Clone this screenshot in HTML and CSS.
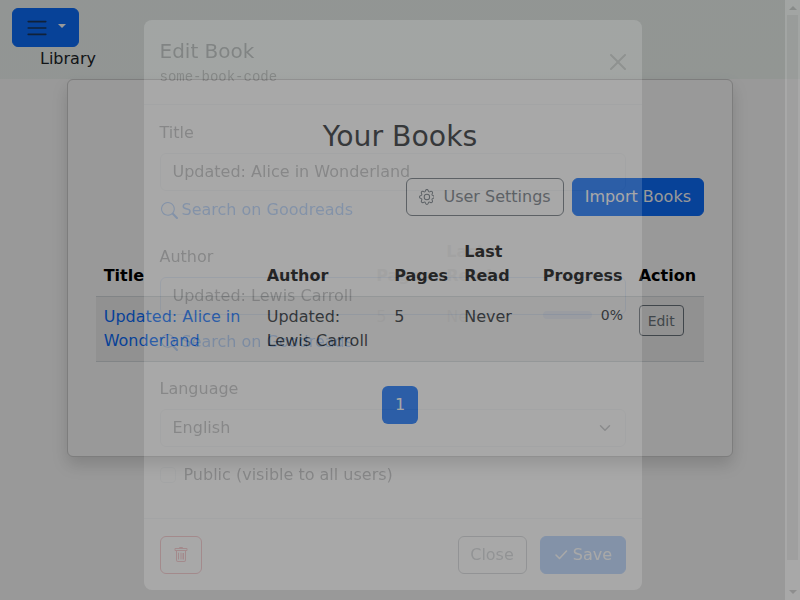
FILE: index.html
```html
<!DOCTYPE html>
<html lang="en">
<head>
<meta charset="utf-8">
<title>Your Books</title>
<link rel="stylesheet" href="styles.css">
</head>
<body>
<div class="page">
  <nav class="navbar">
    <button class="btn primary menu-toggle" aria-label="Menu">
      <svg width="30" height="30" viewBox="0 0 30 30"><path stroke="#212529" stroke-opacity=".75" stroke-linecap="round" stroke-miterlimit="10" stroke-width="2" fill="none" d="M4 7h22M4 15h22M4 23h22"/></svg>
      <span class="caret"></span>
    </button>
    <div class="crumb">Library</div>
  </nav>
  <main class="card">
    <h1>Your Books</h1>
    <div class="actions">
      <button class="btn outline settings"><svg class="gear" width="16" height="16" viewBox="0 0 16 16" fill="currentColor"><path d="M8 4.754a3.246 3.246 0 1 0 0 6.492 3.246 3.246 0 0 0 0-6.492zM5.754 8a2.246 2.246 0 1 1 4.492 0 2.246 2.246 0 0 1-4.492 0z"/><path d="M9.796 1.343c-.527-1.79-3.065-1.79-3.592 0l-.094.319a.873.873 0 0 1-1.255.52l-.292-.16c-1.64-.892-3.433.902-2.54 2.541l.159.292a.873.873 0 0 1-.52 1.255l-.319.094c-1.79.527-1.79 3.065 0 3.592l.319.094a.873.873 0 0 1 .52 1.255l-.16.292c-.892 1.64.901 3.434 2.541 2.54l.292-.159a.873.873 0 0 1 1.255.52l.094.319c.527 1.79 3.065 1.79 3.592 0l.094-.319a.873.873 0 0 1 1.255-.52l.292.16c1.64.893 3.434-.902 2.54-2.541l-.159-.292a.873.873 0 0 1 .52-1.255l.319-.094c1.79-.527 1.79-3.065 0-3.592l-.319-.094a.873.873 0 0 1-.52-1.255l.16-.292c.893-1.64-.902-3.433-2.541-2.54l-.292.159a.873.873 0 0 1-1.255-.52l-.094-.319zm-2.633.283c.246-.835 1.428-.835 1.674 0l.094.319a1.873 1.873 0 0 0 2.693 1.115l.291-.16c.764-.415 1.6.42 1.184 1.185l-.159.292a1.873 1.873 0 0 0 1.116 2.692l.318.094c.835.246.835 1.428 0 1.674l-.319.094a1.873 1.873 0 0 0-1.115 2.693l.16.291c.415.764-.42 1.6-1.185 1.184l-.291-.159a1.873 1.873 0 0 0-2.693 1.116l-.094.318c-.246.835-1.428.835-1.674 0l-.094-.319a1.873 1.873 0 0 0-2.692-1.115l-.292.16c-.764.415-1.6-.42-1.184-1.185l.159-.291A1.873 1.873 0 0 0 1.945 8.93l-.319-.094c-.835-.246-.835-1.428 0-1.674l.319-.094A1.873 1.873 0 0 0 3.06 4.377l-.16-.292c-.415-.764.42-1.6 1.185-1.184l.292.159a1.873 1.873 0 0 0 2.692-1.115l.094-.319z"/></svg>User Settings</button>
      <button class="btn primary">Import Books</button>
    </div>
    <table class="books">
      <colgroup><col class="c1"><col class="c2"><col class="c3"><col class="c4"><col class="c5"><col class="c6"></colgroup>
      <thead><tr><th>Title</th><th>Author</th><th><span class="trail" data-ghost="Pages">Pages</span></th><th><span class="trail" data-ghost="Last&#10;Read">Last<br>Read</span></th><th>Progress</th><th>Action</th></tr></thead>
      <tbody><tr>
        <td><a>Updated: Alice in Wonderland</a></td>
        <td>Updated: Lewis Carroll</td>
        <td><span class="trail" data-ghost="5">5</span></td>
        <td><span class="trail" data-ghost="Never">Never</span></td>
        <td><div class="progress"><span class="bar"></span><small>0%</small></div></td>
        <td><button class="btn outline small">Edit</button></td>
      </tr></tbody>
    </table>
    <div class="pager"><span class="page-link">1</span></div>
  </main>
</div>
<div class="backdrop"></div>
<div class="modal">
  <section class="dialog">
    <header class="modal-head">
      <div><h2>Edit Book</h2><code>some-book-code</code></div>
      <svg class="close" width="16" height="16" viewBox="0 0 16 16"><path d="M.293.293a1 1 0 0 1 1.414 0L8 6.586 14.293.293a1 1 0 1 1 1.414 1.414L9.414 8l6.293 6.293a1 1 0 0 1-1.414 1.414L8 9.414l-6.293 6.293a1 1 0 0 1-1.414-1.414L6.586 8 .293 1.707a1 1 0 0 1 0-1.414z"/></svg>
    </header>
    <div class="modal-body">
      <label>Title</label>
      <div class="field">Updated: Alice in Wonderland</div>
      <a class="search"><svg width="17" height="17" viewBox="0 0 16 16" fill="currentColor"><path d="M11.742 10.344a6.5 6.5 0 1 0-1.397 1.398h-.001c.03.04.062.078.098.115l3.85 3.85a1 1 0 0 0 1.415-1.414l-3.85-3.85a1.007 1.007 0 0 0-.115-.1zM12 6.5a5.5 5.5 0 1 1-11 0 5.5 5.5 0 0 1 11 0z"/></svg>Search on Goodreads</a>
      <label>Author</label>
      <div class="field focused">Updated: Lewis Carroll</div>
      <a class="search lower"><svg width="17" height="17" viewBox="0 0 16 16" fill="currentColor"><path d="M11.742 10.344a6.5 6.5 0 1 0-1.397 1.398h-.001c.03.04.062.078.098.115l3.85 3.85a1 1 0 0 0 1.415-1.414l-3.85-3.85a1.007 1.007 0 0 0-.115-.1zM12 6.5a5.5 5.5 0 1 1-11 0 5.5 5.5 0 0 1 11 0z"/></svg>Search on Goodreads</a>
      <label>Language</label>
      <div class="field select">English<svg width="16" height="12" viewBox="0 0 16 16"><path fill="none" stroke="#343a40" stroke-linecap="round" stroke-linejoin="round" stroke-width="2" d="m2 5 6 6 6-6"/></svg></div>
      <div class="check"><span class="box"></span>Public (visible to all users)</div>
    </div>
    <footer class="modal-foot">
      <button class="btn danger" aria-label="Delete"><svg width="16" height="16" viewBox="0 0 16 16" fill="currentColor"><path d="M5.5 5.5A.5.5 0 0 1 6 6v6a.5.5 0 0 1-1 0V6a.5.5 0 0 1 .5-.5zm2.5 0a.5.5 0 0 1 .5.5v6a.5.5 0 0 1-1 0V6a.5.5 0 0 1 .5-.5zm1.500.500v6.500h1.500V6z"/><path fill-rule="evenodd" d="M14.5 3a1 1 0 0 1-1 1H13v9a2 2 0 0 1-2 2H5a2 2 0 0 1-2-2V4h-.5a1 1 0 0 1-1-1V2a1 1 0 0 1 1-1H6a1 1 0 0 1 1-1h2a1 1 0 0 1 1 1h3.500a1 1 0 0 1 1 1v1zM4.118 4 4 4.059V13a1 1 0 0 0 1 1h6a1 1 0 0 0 1-1V4.059L11.882 4H4.118zM2.500 3V2h11v1h-11z"/></svg></button>
      <button class="btn outline end">Close</button>
      <button class="btn primary save"><svg width="16" height="16" viewBox="0 0 16 16" fill="none" stroke="currentColor" stroke-width="1.5" stroke-linecap="round" stroke-linejoin="round"><path d="M3 8l3.500 3.500 7-7.500"/></svg>Save</button>
    </footer>
  </section>
  <div class="scrollbar"><span class="arrow up"></span><span class="thumb"></span><span class="arrow down"></span></div>
</div>
</body>
</html>
```
FILE: styles.css
```css
* { box-sizing: border-box; }
html, body { height: 100%; overflow: hidden; }
body { margin: 0; background: #fff; color: #212529; font: 16px/24px "DejaVu Sans", sans-serif; }
h1, h2 { margin: 0; font-weight: 400; }
button { font: inherit; color: inherit; }
.page { height: 600px; }
.navbar { height: 79px; padding: 8px 12px; background: linear-gradient(165deg, #f4f9f7, #f3faf6); }
.btn { display: inline-flex; align-items: center; justify-content: center; height: 38px; padding: 0 12px; border: 1px solid; border-radius: 6px; background: transparent; white-space: nowrap; }
.primary { background: #0d6efd; border-color: #0d6efd; color: #fff; }
.outline { color: #6c757d; }
.small { height: 31px; width: 45px; padding: 0; font-size: 14px; border-radius: 4px; }
.menu-toggle { width: 67px; height: 39px; padding: 0 9px; justify-content: space-between; }
.menu-toggle svg { display: block; width: 30px; height: 24px; }
.caret { width: 0; border: 4.8px solid transparent; border-top-color: #fff; border-bottom: 0; margin: 0 3px 3px 0; }
.crumb { padding-left: 28px; }
.card { width: 666px; height: 378px; margin: 0 0 0 67px; padding: 36px 28px 0; background: #fff; border: 1px solid #d0d0d0; border-radius: 6px; box-shadow: 0 8px 16px rgba(0,0,0,.15); }
h1 { font-size: 28.3px; line-height: 42px; text-align: center; color: #212529; }
.actions { display: flex; justify-content: flex-end; gap: 8px; margin-top: 20px; }
.settings { width: 158px; }
.gear { margin-right: 9px; }
.books { width: 608px; margin-top: 16px; table-layout: fixed; border-collapse: collapse; }
.c1 { width: 163px; } .c2 { width: 127.500px; } .c3 { width: 70px; } .c4 { width: 78.500px; } .c5 { width: 96px; } .c6 { width: 73px; }
th, td { padding: 8px 8px 8px 7.700px; text-align: left; }
th { vertical-align: bottom; color: #000; white-space: nowrap; }
td { vertical-align: top; }
tbody tr { height: 65px; background: #f2f2f2; border-top: 1px solid #d8dddf; border-bottom: 1px solid #d8dddf; }
td a { color: #0d6efd; }
.trail { position: relative; }
.trail::before { content: attr(data-ghost); position: absolute; left: -18px; bottom: -3px; white-space: pre; opacity: .045; }
.progress { display: flex; justify-content: space-between; align-items: center; height: 20px; }
.progress small { font-size: 14px; line-height: 20px; }
.bar { width: 49px; height: 8px; border-radius: 4px; background: #e3e8f2; }
.pager { display: flex; justify-content: center; margin-top: 24px; }
.page-link { width: 36px; height: 38px; border-radius: 6px; background: #0d6efd; color: #fff; text-align: center; line-height: 38px; }
.backdrop { position: fixed; inset: 0; background: rgba(0,0,0,.4); }
.modal { position: fixed; inset: 0; display: flex; justify-content: space-between; opacity: .15; }
.dialog { width: 498px; height: 570px; margin: 20px 0 0 143.500px; background: #fff; border-radius: 8px; overflow: hidden; }
.modal-head { display: flex; justify-content: space-between; align-items: center; height: 85px; padding: 0 16px; border-bottom: 1px solid #dee2e6; }
.close { opacity: .5; }
h2 { font-size: 20px; line-height: 30px; margin-top: -1px; }
code { display: block; font: 14px/20px "Liberation Mono", monospace; padding-top: 1px; color: #444; }
.modal-body { height: 414px; padding: 16px; border-bottom: 1px solid #dee2e6; }
label { display: block; margin-bottom: 8px; }
.field { display: flex; align-items: center; justify-content: space-between; height: 38px; padding: 0 12px; border: 1px solid #dee2e6; border-radius: 6px; }
.focused { border-color: #a9c7f7; }
.search { display: flex; align-items: center; gap: 4px; height: 38px; margin-bottom: 16px; padding-left: 1px; color: #0d6efd; }
.lower { margin-top: 8px; }
.check { display: flex; align-items: center; gap: 8px; margin-top: 16px; }
.box { width: 16px; height: 16px; border: 1px solid #dee2e6; border-radius: 4px; }
.modal-foot { display: flex; align-items: center; gap: 13px; height: 71px; padding: 1px 16px 0; }
.danger { width: 42px; color: #dc3545; }
.end { width: 69px; margin-left: auto; }
.save { width: 86px; gap: 4px; }
.scrollbar { display: flex; flex-direction: column; align-items: center; width: 15px; background: #fafafa; }
.thumb { width: 11px; height: 545px; background: #c1c1c1; }
.arrow { border: 4px solid transparent; }
.up { height: 10px; border-top-width: 6px; border-bottom: 4px solid #505050; margin-bottom: 5px; }
.down { border-top: 4px solid #505050; border-bottom: 0; margin-top: 30px; }
```
